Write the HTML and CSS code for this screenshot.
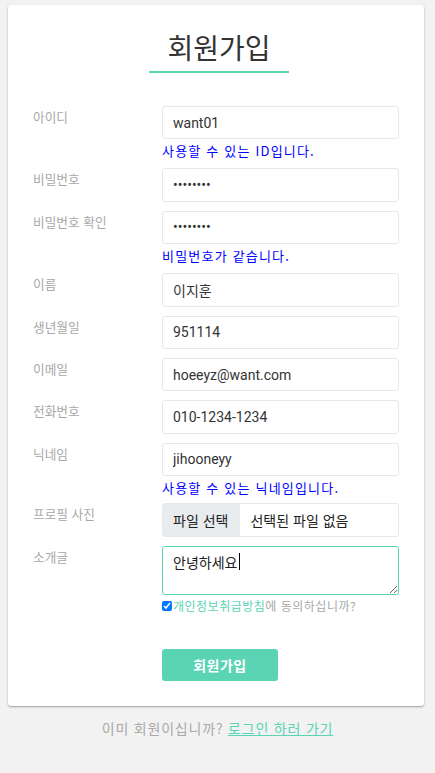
FILE: index.html
```html
<!DOCTYPE html>
<html lang="ko">
<head>
<meta charset="utf-8">
<title>회원가입</title>
<link rel="stylesheet" href="styles.css">
</head>
<body>
<div class="card">
  <h1 class="title">회원가입</h1>
  <form class="form">
    <div class="row">
      <label class="label">아이디</label>
      <div class="field">
        <input class="input" type="text" value="want01">
        <div class="msg">사용할 수 있는 ID입니다.</div>
      </div>
    </div>
    <div class="row">
      <label class="label">비밀번호</label>
      <div class="field"><input class="input" type="password" value="12345678"></div>
    </div>
    <div class="row">
      <label class="label">비밀번호 확인</label>
      <div class="field">
        <input class="input" type="password" value="12345678">
        <div class="msg">비밀번호가 같습니다.</div>
      </div>
    </div>
    <div class="row">
      <label class="label">이름</label>
      <div class="field"><input class="input" type="text" value="이지훈"></div>
    </div>
    <div class="row">
      <label class="label">생년월일</label>
      <div class="field"><input class="input" type="text" value="951114"></div>
    </div>
    <div class="row">
      <label class="label">이메일</label>
      <div class="field"><input class="input" type="text" value="hoeeyz@want.com"></div>
    </div>
    <div class="row">
      <label class="label">전화번호</label>
      <div class="field"><input class="input" type="text" value="010-1234-1234"></div>
    </div>
    <div class="row row-tight">
      <label class="label">닉네임</label>
      <div class="field">
        <input class="input" type="text" value="jihooneyy">
        <div class="msg">사용할 수 있는 닉네임입니다.</div>
      </div>
    </div>
    <div class="row">
      <label class="label">프로필 사진</label>
      <div class="field">
        <div class="file">
          <span class="file-btn">파일 선택</span>
          <span class="file-name">선택된 파일 없음</span>
        </div>
      </div>
    </div>
    <div class="row row-intro">
      <label class="label">소개글</label>
      <div class="field">
        <div class="ta-wrap">
          <textarea class="textarea">안녕하세요</textarea>
          <span class="caret"></span>
        </div>
        <div class="agree">
          <input class="check" type="checkbox" checked><span class="agree-link">개인정보취급방침</span>에 동의하십니까?
        </div>
      </div>
    </div>
    <div class="row row-submit">
      <span></span>
      <div class="field"><button class="submit" type="button">회원가입</button></div>
    </div>
  </form>
</div>
<p class="footer">이미 회원이십니까? <a class="footer-link" href="#">로그인 하러 가기</a></p>
</body>
</html>
```
FILE: styles.css
```css
html, body {
  margin: 0;
  padding: 0;
}
body {
  background: #f2f2f2;
  font-family: "Noto Sans", "Noto Sans CJK KR", sans-serif;
  color: #333;
}
.card {
  margin: 5px 11px 0 8px;
  background: #fff;
  border-radius: 3px;
  box-shadow: 0 1px 2px rgba(0, 0, 0, 0.35);
  padding: 22px 25px 25px;
}
.title {
  margin: 0 0 0 116px;
  width: 140px;
  text-align: center;
  font-family: "Noto Sans CJK KR", sans-serif;
  font-weight: 400;
  font-size: 28px;
  line-height: 40px;
  color: #333;
  padding-bottom: 4px;
  border-bottom: 2px solid #5bd4b4;
}
.form {
  margin-top: 33px;
}
.row {
  display: grid;
  grid-template-columns: 129px 1fr;
  margin-bottom: 9px;
}
.row-tight {
  margin-bottom: 7px;
}
.label {
  font-family: "Noto Sans CJK KR", sans-serif;
  font-size: 12.7px;
  line-height: 16px;
  padding-top: 3px;
  color: #a8a8a8;
}
.field {
  min-width: 0;
}
.input {
  display: block;
  box-sizing: border-box;
  width: 100%;
  height: 33.4px;
  margin: 0;
  padding: 0 10px;
  border: 1px solid #e8e8e8;
  border-radius: 3px;
  font-family: Roboto, "Noto Sans CJK KR", sans-serif;
  font-size: 14px;
  color: #333;
  outline: none;
}
.msg {
  font-family: "Noto Sans CJK KR", sans-serif;
  font-size: 13px;
  line-height: 16px;
  letter-spacing: 1.2px;
  padding-top: 4px;
  color: #0000ff;
}
.file {
  display: flex;
  align-items: stretch;
  box-sizing: border-box;
  height: 33.7px;
  border: 1px solid #e8e8e8;
  border-radius: 3px;
  overflow: hidden;
  font-family: "Noto Sans CJK KR", sans-serif;
  font-size: 14px;
  color: #222;
}
.file-btn {
  display: flex;
  align-items: center;
  padding: 0 12px 0 10px;
  background: #e9ecef;
}
.file-name {
  display: flex;
  align-items: center;
  padding-left: 10px;
}
.ta-wrap {
  position: relative;
}
.textarea {
  display: block;
  box-sizing: border-box;
  width: 100%;
  height: 49.3px;
  margin: 0;
  padding: 5px 10px;
  border: 1px solid #5bd4b4;
  border-radius: 3px;
  font-family: "Noto Sans CJK KR", sans-serif;
  font-size: 14px;
  line-height: 20px;
  color: #222;
  outline: none;
  resize: vertical;
}
.caret {
  position: absolute;
  left: 77px;
  top: 7px;
  width: 1px;
  height: 17px;
  background: #000;
}
.agree {
  margin-top: 3px;
  font-family: "Noto Sans CJK KR", sans-serif;
  font-size: 12px;
  line-height: 16px;
  letter-spacing: 0.5px;
  color: #a8a8a8;
  display: flex;
  align-items: center;
}
.check {
  width: 10px;
  height: 10px;
  margin: 0 1px 0 0;
}
.agree-link {
  color: #5bd4b4;
}
.row-intro {
  margin-bottom: 0;
}
.row-submit {
  margin: 35px 0 0;
}
.submit {
  width: 116px;
  height: 32px;
  border: none;
  border-radius: 3px;
  background: #5bd4b4;
  color: #fff;
  font-family: "Noto Sans CJK KR", sans-serif;
  font-weight: 700;
  font-size: 14px;
  letter-spacing: 0.5px;
  padding: 0;
}
.footer {
  margin: 12px 0 0;
  text-align: center;
  font-family: "Noto Sans CJK KR", sans-serif;
  font-size: 14px;
  line-height: 20px;
  letter-spacing: 0.8px;
  color: #a8a8a8;
}
.footer-link {
  color: #5bd4b4;
  text-decoration: underline;
}
```
